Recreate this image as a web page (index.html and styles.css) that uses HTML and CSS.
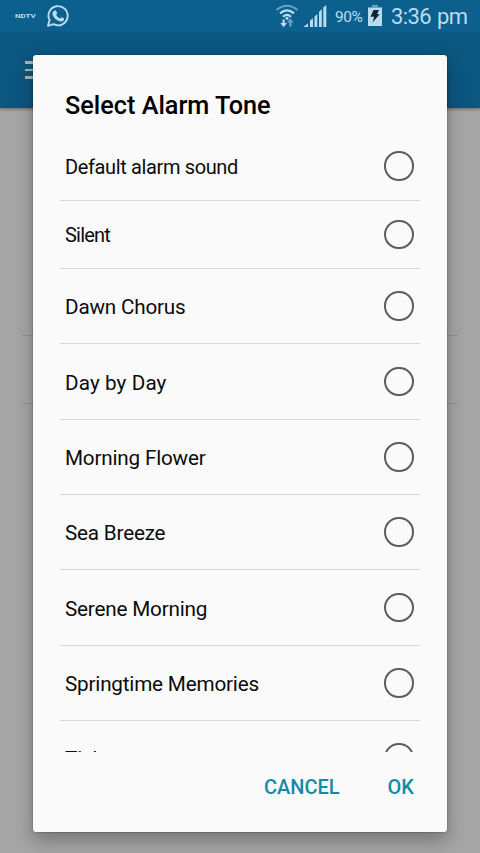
FILE: index.html
```html
<!DOCTYPE html>
<html lang="en">
<head>
<meta charset="utf-8">
<meta name="viewport" content="width=device-width, initial-scale=1">
<title>Select Alarm Tone</title>
<link rel="stylesheet" href="styles.css">
</head>
<body>
<div class="screen">
  <header class="status">
    <span class="ndtv">NDTV</span>
    <svg class="whatsapp" width="24" height="24" viewBox="0 0 24 24" fill="none" stroke="#b9dcf0">
      <path stroke-width="1.9" stroke-linejoin="round" d="M2 21.8 3.6 16.2A9.6 9.6 0 1 1 7.6 20.2Z"/>
      <path fill="#b9dcf0" stroke="none" d="M8.600 6.500h1c.4 0 .6.3.8.8l.7 1.800c.2.6-.8 1.400-1 1.700.9 1.900 2.200 3 4 3.800.4 0 1.200-1.500 1.600-1.400l2.200 1.100c.5.3.2 1.600-.3 2.200-.9 1-2.500 1.300-4 .8-3.600-1.100-5.800-3.500-7-6.300-.6-1.700 0-3.700 2-4.500z"/>
    </svg>
    <svg class="wifi" width="24" height="24" viewBox="0 0 24 24" fill="none">
      <path stroke="#6da3c4" stroke-width="2" d="M1.500 6Q12-2.500 22.500 6"/>
      <g stroke="#b9dcf0" stroke-width="2.200">
        <path d="M5 9.400Q12 3.300 19 9.400"/>
        <path d="M8 12.800Q12 9.100 16 12.800"/>
      </g>
      <circle cx="12" cy="14.300" r="1.500" fill="#b9dcf0"/>
      <path fill="#b9dcf0" d="M7.500 15.500h2.200V19h2.300l-3.400 4.300L5.200 19h2.300z"/>
      <path fill="#6da3c4" d="M14.200 22.500h2.200v-4h2.400l-3.500-4.300-3.400 4.300h2.300z"/>
    </svg>
    <svg class="signal" width="23" height="22" viewBox="0 0 23 22" fill="#b9dcf0">
      <path d="M0 22v-.5L4 18.500V22zM6 22v-6.500l3-2.300V22zM10.500 22V11.500l2.800-2.500v13zM15 22V7l2.800-3v18zM19.300 22V2.500L22.300 0v22z"/>
    </svg>
    <span class="percent">90%</span>
    <svg class="battery" width="14" height="21" viewBox="0 0 14 21">
      <path fill="#6da3c4" d="M4 0h6v2h4v2H0V2h4z"/>
      <path fill="#b9dcf0" d="M0 3h14v18H0z"/>
      <path fill="#082638" d="M5.500 5h5.500L9 9.300h2.700L4.500 17.500l1.700-5.700H2.500z"/>
    </svg>
    <span class="clock">3:36 pm</span>
  </header>
  <div class="appbar"><div class="menu"><i></i><i></i><i></i></div></div>
  <div class="page"><div class="band"></div></div>
  <section class="dialog" role="dialog">
    <h1>Select Alarm Tone</h1>
    <ul class="tones">
      <li class="short"><span>Default alarm sound</span><i class="radio"></i></li>
      <li class="short tight"><span>Silent</span><i class="radio"></i></li>
      <li><span>Dawn Chorus</span><i class="radio"></i></li>
      <li class="loose"><span>Day by Day</span><i class="radio"></i></li>
      <li><span>Morning Flower</span><i class="radio"></i></li>
      <li><span>Sea Breeze</span><i class="radio"></i></li>
      <li><span>Serene Morning</span><i class="radio"></i></li>
      <li><span>Springtime Memories</span><i class="radio"></i></li>
      <li class="last"><span>Ticktac</span><i class="radio"></i></li>
    </ul>
    <footer class="actions"><button>CANCEL</button><button>OK</button></footer>
  </section>
</div>
</body>
</html>
```
FILE: styles.css
```css
* { box-sizing: border-box; }
body { margin: 0; font-family: Roboto, sans-serif; }
.screen {
  position: relative;
  display: flex;
  flex-direction: column;
  width: 480px;
  height: 853px;
  overflow: hidden;
  background: #a5a5a5;
}
.status {
  display: flex;
  align-items: flex-start;
  flex: none;
  height: 33px;
  padding-left: 15px;
  background: #0c608e;
  color: #b9dcf0;
  white-space: nowrap;
}
.ndtv {
  width: 22px;
  margin-top: 12px;
  font: 700 6px/8px Roboto, sans-serif;
  transform: scaleX(1.32);
  transform-origin: left;
}
.whatsapp { margin: 4px 0 0 9px; }
.wifi { margin: 4px 0 0 205px; }
.signal { margin: 5px 0 0 5px; }
.percent {
  width: 30px;
  margin: 7px 0 0 8px;
  font-size: 15.500px;
  line-height: 20px;
  letter-spacing: -.4px;
}
.battery { margin: 5px 0 0 3px; }
.clock {
  margin: 3px 0 0 9px;
  font-size: 22px;
  line-height: 28px;
  letter-spacing: -.6px;
  word-spacing: 1px;
}
.appbar {
  flex: none;
  height: 75px;
  padding: 28px 0 0 25px;
  background: #0b577f;
  box-shadow: 0 1px 3px rgba(0, 0, 0, .4);
}
.menu { display: flex; flex-direction: column; gap: 5px; width: 24px; }
.menu i { height: 2.500px; background: #a9b6bd; }
.page { flex: 1; padding: 227px 21px 0; }
.band { height: 69px; border: solid #979797; border-width: 1px 0; }
.dialog {
  position: absolute;
  top: 55px;
  left: 33px;
  display: flex;
  flex-direction: column;
  width: 414px;
  height: 777px;
  border-radius: 3px;
  background: #fafafa;
  box-shadow: 0 0 2px rgba(0, 0, 0, .45), 0 8px 18px rgba(0, 0, 0, .3);
}
h1 {
  flex: none;
  height: 77px;
  margin: 0;
  padding: 36px 0 0 32px;
  font-size: 25.250px;
  font-weight: 500;
  line-height: 30px;
  color: #000;
}
.tones {
  flex: none;
  height: 620px;
  margin: 0 27px;
  padding: 0;
  overflow: hidden;
  list-style: none;
}
.tones li {
  display: flex;
  align-items: center;
  justify-content: space-between;
  height: 75.350px;
  padding: 0 6.500px 0 5px;
  border-bottom: 1px solid #d8d8d8;
  font-size: 20.700px;
  letter-spacing: -.2px;
  color: #0c0c0c;
}
.tones span { padding-top: 2px; }
.tones .short { height: 68.500px; font-size: 20px; letter-spacing: -.37px; }
.tones .tight { letter-spacing: -.8px; }
.tones .loose { letter-spacing: .1px; }
.tones .last span { padding-top: 1px; }
.radio {
  width: 29.500px;
  height: 29.500px;
  border: 2px solid #5c5c5c;
  border-radius: 50%;
}
.actions {
  display: flex;
  justify-content: flex-end;
  gap: 48px;
  padding: 22px 33px 0 0;
}
button {
  padding: 0;
  border: 0;
  background: none;
  font: 500 20px/26px Roboto, sans-serif;
  color: #128ba7;
}
```
